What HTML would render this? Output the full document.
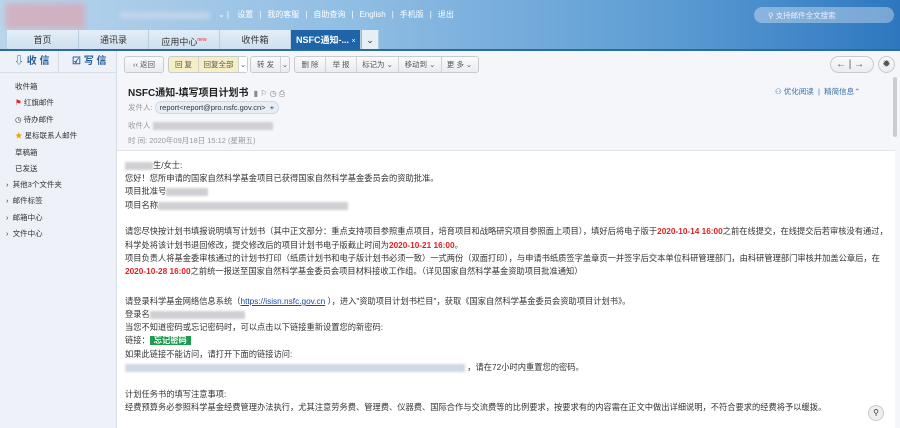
<!DOCTYPE html>
<html><head><meta charset="utf-8"><style>
*{margin:0;padding:0;box-sizing:border-box}
body{width:900px;height:428px;overflow:hidden;font-family:"Liberation Sans","Noto Sans CJK SC",sans-serif;background:#f4f6fa;position:relative;color:#333}
.abs{position:absolute}
.top{left:0;top:0;width:900px;height:50px;background:linear-gradient(90deg,#b9d5ec 0%,#8fbde3 40%,#5b9bd3 75%,#2e77bf 100%)}
.topnav{left:218px;top:9px;font-size:8px;color:#fff;white-space:nowrap}
.topnav span{margin:0 6px}
.search{left:754px;top:7px;width:140px;height:16px;border-radius:8px;background:rgba(255,255,255,.35);font-size:7.5px;color:#eef;padding:3px 0 0 14px}
.tabs{left:7px;top:30px;height:20px}
.tab{position:absolute;top:0;height:20px;background:linear-gradient(#e3eef8,#cfdfee);font-size:9px;color:#333;text-align:center;line-height:20px;border-right:1px solid #b8cde0}
.tab.act{background:#1e64a6;color:#fff;font-weight:bold;text-align:left;padding-left:5px}
.bar{left:0;top:49px;width:900px;height:2px;background:#2a6aa6}
.side{left:0;top:51px;width:117px;height:377px;background:#eef2f8;border-right:1px solid #d6dde6}
.wr{top:0;height:21px;font-size:10px;color:#2b5f98;font-weight:bold;line-height:21px}
.sitem{position:absolute;left:15px;font-size:7.5px;color:#333}
.btn{position:absolute;top:56px;height:17px;border:1px solid #c8ccd2;border-radius:3px;background:linear-gradient(#fbfbfb,#eaecef);font-size:7.5px;color:#555;line-height:15px;white-space:nowrap;display:flex}
.btn span{display:block;text-align:center;border-right:1px solid #d0d3d8;flex:none}
.btn span:last-child{border-right:0}
.body{left:117px;top:150px;width:778px;height:278px;background:#fff;border-top:1px solid #e0e4ea}
.txt{position:absolute;left:125px;font-size:8.25px;line-height:13.3px;white-space:nowrap;color:#333}
.r{color:#e02020;font-weight:bold}
.blur{display:inline-block;height:8px;background:#cfcfd4;vertical-align:middle;filter:blur(1px)}
.hd{position:absolute;font-size:7.5px;color:#999}
</style></head><body>
<div class="abs top"></div>
<div class="abs" style="left:5px;top:3px;width:80px;height:26px;background:#d8aab8;filter:blur(3px);opacity:.8"></div>
<div class="abs" style="left:120px;top:12px;width:90px;height:7px;background:#c2d4ea;filter:blur(2px)"></div>
<div class="abs topnav">⌄ | <span>设置</span>|<span>我的客服</span>|<span>自助查询</span>|<span>English</span>|<span>手机版</span>|<span>退出</span></div>
<div class="abs search">&#9906; 支持邮件全文搜索</div>
<div class="abs tabs">
<div class="tab" style="left:0;width:72px">首页</div>
<div class="tab" style="left:72px;width:70px">通讯录</div>
<div class="tab" style="left:142px;width:71px">应用中心<sup style="color:#e22;font-size:5px">new</sup></div>
<div class="tab" style="left:213px;width:71px">收件箱</div>
<div class="tab act" style="left:284px;width:70px">NSFC通知-... <span style="font-weight:normal;font-size:7px">×</span></div>
<div class="tab" style="left:355px;width:17px;background:#e6eef6">⌄</div>
</div>
<div class="abs bar"></div>
<div class="abs side">
<div class="abs wr" style="left:14px">⇩ 收 信</div>
<div class="abs wr" style="left:72px">☑ 写 信</div>
<div class="abs" style="left:0;top:21px;width:117px;height:1px;background:#d6dde6"></div>
<div class="abs" style="left:58px;top:0;width:1px;height:21px;background:#d6dde6"></div>
<div class="sitem" style="top:30px">收件箱</div>
<div class="sitem" style="top:46px"><span style="color:#d22">⚑</span> 红旗邮件</div>
<div class="sitem" style="top:63px">◷ 待办邮件</div>
<div class="sitem" style="top:79px"><span style="color:#f0a000">★</span> 星标联系人邮件</div>
<div class="sitem" style="top:96px">草稿箱</div>
<div class="sitem" style="top:112px">已发送</div>
<div class="sitem" style="top:128px;left:6px">›&nbsp; 其他3个文件夹</div>
<div class="sitem" style="top:144px;left:6px">›&nbsp; 邮件标签</div>
<div class="sitem" style="top:161px;left:6px">›&nbsp; 邮箱中心</div>
<div class="sitem" style="top:177px;left:6px">›&nbsp; 文件中心</div>
</div>
<div class="btn" style="left:124px;width:40px"><span style="width:38px">‹‹ 返回</span></div>
<div class="btn" style="left:168px;width:80px;background:#f7efc4"><span style="width:30px">回 复</span><span style="width:40px">回复全部</span><span style="width:8px;background:#fff">⌄</span></div>
<div class="btn" style="left:250px;width:40px"><span style="width:30px">转 发</span><span style="width:8px">⌄</span></div>
<div class="btn" style="left:294px;width:185px"><span style="width:31px">删 除</span><span style="width:31px">举 报</span><span style="width:42px">标记为 ⌄</span><span style="width:43px">移动到 ⌄</span><span style="width:35px">更 多 ⌄</span></div>
<div class="btn" style="left:830px;width:44px;border-radius:9px;font-size:10px;padding-left:5px">← | →</div>
<div class="btn" style="left:878px;width:17px;border-radius:9px;font-size:10px;justify-content:center">✹</div>
<div class="abs" style="left:128px;top:84px;font-size:10px;font-weight:bold;color:#222">NSFC通知-填写项目计划书 <span style="font-weight:normal;color:#888;font-size:8px">&nbsp;▮ ⚐ ◷ ⎙</span></div>
<div class="abs" style="left:775px;top:86px;font-size:7.5px;color:#3a6ea5">⚇ 优化阅读 &nbsp;|&nbsp; 精简信息⌃</div>
<div class="hd" style="left:128px;top:102px">发件人: <span style="background:#e8eef6;border:1px solid #cfd9e6;border-radius:7px;padding:1px 4px;color:#333">report&lt;report@pro.nsfc.gov.cn&gt; &nbsp;+</span></div>
<div class="hd" style="left:128px;top:120px">收件人 <span class="blur" style="width:120px"></span></div>
<div class="hd" style="left:128px;top:135px">时 间: 2020年09月18日 15:12 (星期五)</div>
<div class="abs body"></div>
<div class="abs" style="left:893px;top:77px;width:4px;height:60px;background:#ccc;border-radius:2px"></div>
<div class="txt" style="top:159px"><span class="blur" style="width:28px"></span>生/女士:</div>
<div class="txt" style="top:172px">您好！您所申请的国家自然科学基金项目已获得国家自然科学基金委员会的资助批准。</div>
<div class="txt" style="top:185px">项目批准号<span class="blur" style="width:42px"></span></div>
<div class="txt" style="top:199px">项目名称<span class="blur" style="width:190px"></span></div>
<div class="txt" style="top:225px">请您尽快按计划书填报说明填写计划书（其中正文部分：重点支持项目参照重点项目，培育项目和战略研究项目参照面上项目），填好后将电子版于<span class="r">2020-10-14 16:00</span>之前在线提交，在线提交后若审核没有通过，</div>
<div class="txt" style="top:239px">科学处将该计划书退回修改，提交修改后的项目计划书电子版截止时间为<span class="r">2020-10-21 16:00</span>。</div>
<div class="txt" style="top:252px">项目负责人将基金委审核通过的计划书打印（纸质计划书和电子版计划书必须一致）一式两份（双面打印），与申请书纸质签字盖章页一并签字后交本单位科研管理部门，由科研管理部门审核并加盖公章后，在</div>
<div class="txt" style="top:265px"><span class="r">2020-10-28 16:00</span>之前统一报送至国家自然科学基金委员会项目材料接收工作组。（详见国家自然科学基金资助项目批准通知）</div>
<div class="txt" style="top:295px">请登录科学基金网络信息系统（<u style="color:#1a4aa0">https://isisn.nsfc.gov.cn</u> ），进入"资助项目计划书栏目"，获取《国家自然科学基金委员会资助项目计划书》。</div>
<div class="txt" style="top:308px">登录名<span class="blur" style="width:95px"></span></div>
<div class="txt" style="top:321px">当您不知道密码或忘记密码时，可以点击以下链接重新设置您的新密码:</div>
<div class="txt" style="top:334px">链接：<span style="background:#1e9b50;color:#fff;font-weight:bold;padding:0 4px">忘记密码</span></div>
<div class="txt" style="top:348px">如果此链接不能访问，请打开下面的链接访问:</div>
<div class="txt" style="top:361px"><span class="blur" style="width:340px;background:#d0d8e8"></span> ，请在72小时内重置您的密码。</div>
<div class="txt" style="top:388px">计划任务书的填写注意事项:</div>
<div class="txt" style="top:401px">经费预算务必参照科学基金经费管理办法执行，尤其注意劳务费、管理费、仪器费、国际合作与交流费等的比例要求，按要求有的内容需在正文中做出详细说明，不符合要求的经费将予以缓拨。</div>
<div class="abs" style="left:868px;top:405px;width:16px;height:16px;border-radius:50%;background:#eee;border:1px solid #ccc;font-size:8px;text-align:center;line-height:14px">&#9906;</div>
</body></html>
